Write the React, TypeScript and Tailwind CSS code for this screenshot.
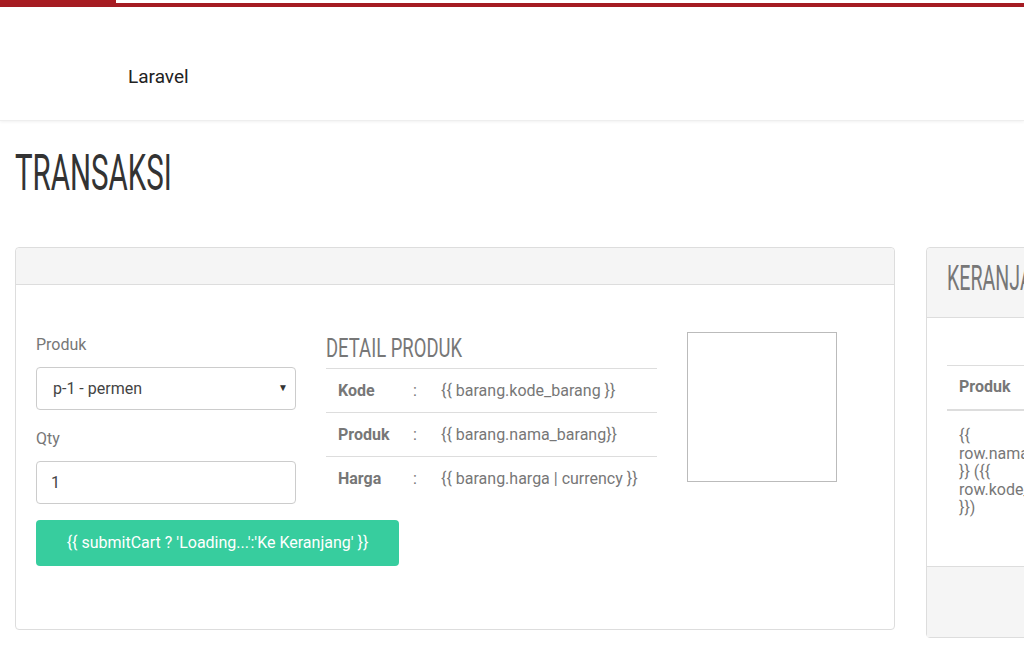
import React from 'react'

const heading = "inline-block origin-left font-['Roboto',sans-serif] font-normal"

export default function App() {
    return (
        <div className="h-[659px] w-[1024px] overflow-hidden bg-white font-['Roboto',sans-serif] text-[#777]">
            {/* top browser strip */}
            <div className="flex h-[3px] w-full">
                <div className="w-[116px] bg-[#a81c22]" />
                <div className="flex-1 rounded-tl-[6px] bg-white" />
            </div>
            <div className="h-[4px] w-full bg-[#a51c23]" />

            <nav className="flex h-[114px] items-center border-b border-[#eee] bg-white pl-[128px] shadow-[0_1px_3px_rgba(0,0,0,0.06)]">
                <span className="pt-[27px] text-[19px] text-[#222]">Laravel</span>
            </nav>

            <div className="px-[15px]">
                <h1 className="mt-[22px] h-[60px] leading-[60px]">
                    <span className={`${heading} scale-x-[0.59] text-[50px] text-[#333]`}>TRANSAKSI</span>
                </h1>

                <div className="mt-[44px] flex gap-[31px]">
                    {/* left panel */}
                    <div className="h-[383px] w-[880px] shrink-0 rounded-[4px] border border-[#ddd]">
                        <div className="h-[37px] rounded-t-[4px] border-b border-[#ddd] bg-[#f5f5f5]" />
                        <div className="flex px-[20px] pt-[48px]">
                            <div className="w-[363px] shrink-0">
                                <div className="w-[260px]">
                                    <label className="block text-[16px] leading-[24px]">Produk</label>
                                    <div className="relative mt-[10px] flex h-[43px] items-center rounded-[4px] border border-[#ccc] pl-[16px] text-[16px] text-[#444]">
                                        p-1 - permen
                                        <span className="absolute right-[7px] top-[12px] text-[10px] text-[#333]">▼</span>
                                    </div>
                                    <label className="mt-[17px] block text-[16px] leading-[24px]">Qty</label>
                                    <div className="mt-[10px] flex h-[43px] items-center rounded-[4px] border border-[#ccc] pl-[14px] text-[16px] text-[#444]">
                                        1
                                    </div>
                                </div>
                                <button className="mt-[16px] h-[46px] w-[363px] rounded-[4px] bg-[#37cd9e] text-[16px] text-white">
                                    {"{{ submitCart ? 'Loading...':'Ke Keranjang' }}"}
                                </button>
                            </div>

                            <div className="-ml-[73px] w-[331px] shrink-0">
                                <h3 className="h-[35px] leading-[30px]">
                                    <span className={`${heading} scale-x-[0.71] text-[26px] text-[#777]`}>DETAIL PRODUK</span>
                                </h3>
                                <table className="w-full text-[16px]">
                                    <tbody>
                                        {[
                                            ['Kode', '{{ barang.kode_barang }}'],
                                            ['Produk', '{{ barang.nama_barang}}'],
                                            ['Harga', '{{ barang.harga | currency }}'],
                                        ].map(([k, v]) => (
                                            <tr key={k} className="h-[44px] border-t border-[#ddd]">
                                                <td className="w-[87px] pl-[12px] font-bold">{k}</td>
                                                <td className="w-[28px]">:</td>
                                                <td>{v}</td>
                                            </tr>
                                        ))}
                                    </tbody>
                                </table>
                            </div>

                            <div className="ml-[30px] mt-[-1px] h-[150px] w-[150px] shrink-0 border border-[#bbb]" />
                        </div>
                    </div>

                    {/* right panel */}
                    <div className="h-[391px] w-[300px] shrink-0 rounded-[4px] border border-[#ddd]">
                        <div className="flex h-[70px] items-center rounded-t-[4px] border-b border-[#ddd] bg-[#f5f5f5] pb-[6px] pl-[20px]">
                            <span className={`${heading} scale-x-[0.56] text-[35px] text-[#777]`}>KERANJANG</span>
                        </div>
                        <div className="h-[248px] px-[20px] pt-[47px]">
                            <table className="text-[16px]">
                                <thead>
                                    <tr className="h-[44px] border-y-2 border-t border-[#ddd]">
                                        <th className="w-[80px] pl-[12px] text-left font-bold">Produk</th>
                                        <th className="pl-[12px] text-left font-bold">Qty</th>
                                    </tr>
                                </thead>
                                <tbody>
                                    <tr>
                                        <td className="max-w-[80px] pl-[12px] pt-[16px] align-top leading-[18px] text-[#777]">
                                            {'{{ row.nama_barang }} ({{ row.kode_barang }})'}
                                        </td>
                                        <td className="pl-[12px] pt-[16px] align-top">{'{{ row.qty }}'}</td>
                                    </tr>
                                </tbody>
                            </table>
                        </div>
                        <div className="h-[71px] border-t border-[#ddd] bg-[#f5f5f5]" />
                    </div>
                </div>
            </div>
        </div>
    )
}
